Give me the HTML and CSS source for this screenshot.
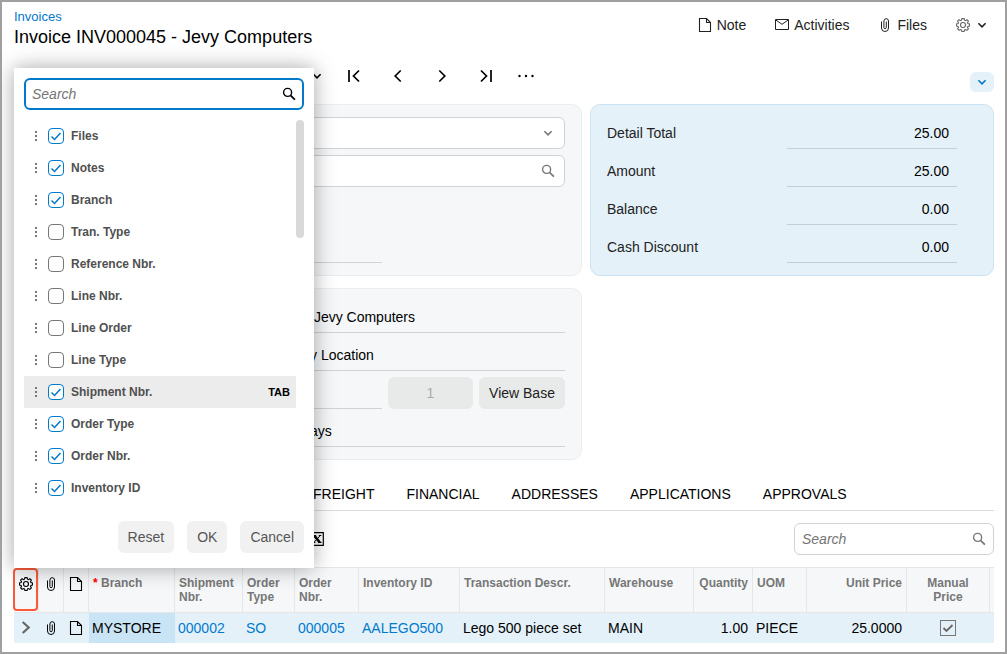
FILE: index.html
```html
<!DOCTYPE html>
<html lang="en">
    <head>
        <meta charset="utf-8">
        <title>Invoices</title>
        <link rel="stylesheet" href="styles.css">
    </head>
    <body>
        <!-- shared icons -->
        <svg class="sprite" aria-hidden="true">
            <symbol id="i-note" viewBox="0 0 14 14"><path d="M1.500 .5h7l4 4v9h-11zM8.500 .5v4h4" fill="none" stroke="currentColor" stroke-width="1.100"/></symbol>
            <symbol id="i-mail" viewBox="0 0 14 14"><path d="M.5 1.500h13v10H.5zM.8 2L7 6.300 13.200 2" fill="none" stroke="currentColor" stroke-width="1"/></symbol>
            <symbol id="i-clip" viewBox="0 0 14 14"><path d="M3.500 3.500v6.500a3.500 3.500 0 0 0 7 0V3a2.300 2.300 0 0 0-4.600 0v6.500a1.200 1.200 0 0 0 2.400 0V3.500" fill="none" stroke="currentColor" stroke-width="1"/></symbol>
            <symbol id="i-gear" viewBox="0 0 14 14"><path d="M5.900 .6h2.200l.4 1.600 1 .4 1.400-.9 1.500 1.500-.9 1.400.4 1 1.600.4v2.100l-1.600.4-.4 1 .9 1.400-1.500 1.500-1.400-.9-1 .4-.4 1.600H5.900l-.4-1.600-1-.4-1.400.9-1.500-1.500.9-1.400-.4-1-1.600-.4V6l1.600-.4.4-1-.9-1.400 1.500-1.500 1.400.9 1-.4z" fill="none" stroke="currentColor" stroke-width="1.100"/><circle cx="7" cy="7" r="2.500" fill="none" stroke="currentColor" stroke-width="1.100"/></symbol>
            <symbol id="i-down" viewBox="0 0 14 14"><path d="M3.400 5.200L7 8.800l3.600-3.600" fill="none" stroke="currentColor" stroke-width="1.600"/></symbol>
            <symbol id="i-search" viewBox="0 0 14 14"><circle cx="5.600" cy="5.400" r="4" fill="none" stroke="currentColor" stroke-width="1.400"/><path d="M8.500 8.300l4.400 4.400" stroke="currentColor" stroke-width="1.700"/></symbol>
            <symbol id="i-first" viewBox="0 0 14 14"><path d="M2 1v12M12 1.500L6.500 7l5.500 5.500" fill="none" stroke="currentColor" stroke-width="1.700"/></symbol>
            <symbol id="i-prev" viewBox="0 0 14 14"><path d="M9.700 1.500L4.200 7l5.500 5.500" fill="none" stroke="currentColor" stroke-width="1.700"/></symbol>
            <symbol id="i-next" viewBox="0 0 14 14"><path d="M4.300 1.500L9.800 7l-5.500 5.500" fill="none" stroke="currentColor" stroke-width="1.700"/></symbol>
            <symbol id="i-last" viewBox="0 0 14 14"><path d="M12 1v12M2 1.500L7.500 7 2 12.500" fill="none" stroke="currentColor" stroke-width="1.700"/></symbol>
            <symbol id="i-more" viewBox="0 0 16 14"><circle cx="1.500" cy="7" r="1.200"/><circle cx="8" cy="7" r="1.200"/><circle cx="14.500" cy="7" r="1.200"/></symbol>
            <symbol id="i-excel" viewBox="0 0 14 14"><path d="M.7 .7h12.600v12.600H.7z" fill="none" stroke="currentColor" stroke-width="1.200"/><path d="M4.200 3.500l5.600 7" stroke="currentColor" stroke-width="2.600"/><path d="M10.300 3.500L3.800 10.500M2.800 3.500h3.400M8.800 3.500h2.600M2.600 10.500h2.800M8 10.500h3.500" stroke="currentColor" stroke-width="1"/></symbol>
            <symbol id="i-row" viewBox="0 0 14 14"><path d="M3.700 1L9.700 6.500l-6 5.500" fill="none" stroke="currentColor" stroke-width="2.200"/></symbol>
            <symbol id="i-drag" viewBox="0 0 4 12"><path d="M1 1h2v2H1zM1 5h2v2H1zM1 9h2v2H1z"/></symbol>
        </svg>

        <header class="head">
            <div>
                <a class="crumb" href="#">Invoices</a>
                <h1>Invoice INV000045 - Jevy Computers</h1>
            </div>
            <div class="actions">
                <button><svg class="icon"><use href="#i-note"/></svg>Note</button>
                <button><svg class="icon"><use href="#i-mail"/></svg>Activities</button>
                <button><svg class="icon"><use href="#i-clip"/></svg>Files</button>
                <button aria-label="Settings"><svg class="icon gray"><use href="#i-gear"/></svg><svg class="icon"><use href="#i-down"/></svg></button>
            </div>
        </header>

        <div class="toolbar">
            <button class="drop" aria-label="Menu"><svg class="icon"><use href="#i-down"/></svg></button>
            <button aria-label="First"><svg class="icon"><use href="#i-first"/></svg></button>
            <button aria-label="Previous"><svg class="icon"><use href="#i-prev"/></svg></button>
            <button aria-label="Next"><svg class="icon"><use href="#i-next"/></svg></button>
            <button aria-label="Last"><svg class="icon"><use href="#i-last"/></svg></button>
            <button class="more" aria-label="More"><svg class="icon wide"><use href="#i-more"/></svg></button>
            <button class="collapse" aria-label="Expand"><svg class="icon"><use href="#i-down"/></svg></button>
        </div>

        <main>
            <div class="cards">
                <section class="card">
                    <div class="box">
                        <select aria-label="Type"><option></option></select>
                        <svg class="icon"><use href="#i-down"/></svg>
                    </div>
                    <div class="box">
                        <input type="text" aria-label="Reference">
                        <svg class="icon"><use href="#i-search"/></svg>
                    </div>
                    <div class="spacer"></div>
                    <div class="split">
                        <input class="line" type="text" aria-label="Date">
                    </div>
                </section>
                <section class="card totals">
                    <div class="total"><label for="detail">Detail Total</label><input class="line" id="detail" value="25.00" readonly></div>
                    <div class="total"><label for="amount">Amount</label><input class="line" id="amount" value="25.00" readonly></div>
                    <div class="total"><label for="balance">Balance</label><input class="line" id="balance" value="0.00" readonly></div>
                    <div class="total"><label for="discount">Cash Discount</label><input class="line" id="discount" value="0.00" readonly></div>
                </section>
                <section class="card">
                    <input class="line" aria-label="Customer" value=" Jevy Computers" readonly>
                    <input class="line" aria-label="Location" value="y Location" readonly>
                    <div class="split">
                        <input class="line" type="text" aria-label="Currency" readonly>
                        <button class="btn" disabled>1</button>
                        <button class="btn">View Base</button>
                    </div>
                    <input class="line" aria-label="Terms" value="ays" readonly>
                </section>
            </div>

            <nav class="tabs">
                <button>FREIGHT</button>
                <button>FINANCIAL</button>
                <button>ADDRESSES</button>
                <button>APPLICATIONS</button>
                <button>APPROVALS</button>
            </nav>

            <div class="gridbar">
                <button aria-label="Export"><svg class="icon"><use href="#i-excel"/></svg></button>
                <div class="box search">
                    <input type="text" placeholder="Search" aria-label="Search lines">
                    <svg class="icon"><use href="#i-search"/></svg>
                </div>
            </div>

            <table>
                <colgroup>
                    <col class="w-icon"><col class="w-icon"><col class="w-icon">
                    <col class="w-branch"><col class="w-ship"><col class="w-otype"><col class="w-onbr">
                    <col class="w-inv"><col><col class="w-ware"><col class="w-qty">
                    <col class="w-uom"><col class="w-price"><col class="w-manual"><col class="w-end">
                </colgroup>
                <thead>
                    <tr>
                        <th class="ic"><button class="config" aria-label="Columns"><svg class="icon"><use href="#i-gear"/></svg></button></th>
                        <th class="ic"><svg class="icon"><use href="#i-clip"/></svg></th>
                        <th class="ic"><svg class="icon"><use href="#i-note"/></svg></th>
                        <th><span class="req">*</span> Branch</th>
                        <th>Shipment Nbr.</th>
                        <th>Order Type</th>
                        <th>Order Nbr.</th>
                        <th>Inventory ID</th>
                        <th>Transaction Descr.</th>
                        <th>Warehouse</th>
                        <th class="num">Quantity</th>
                        <th>UOM</th>
                        <th class="num">Unit Price</th>
                        <th class="mid">Manual Price</th>
                        <th></th>
                    </tr>
                </thead>
                <tbody>
                    <tr>
                        <td class="ic gray"><svg class="icon"><use href="#i-row"/></svg></td>
                        <td class="ic"><svg class="icon"><use href="#i-clip"/></svg></td>
                        <td class="ic"><svg class="icon"><use href="#i-note"/></svg></td>
                        <td class="current">MYSTORE</td>
                        <td><a href="#">000002</a></td>
                        <td><a href="#">SO</a></td>
                        <td><a href="#">000005</a></td>
                        <td><a href="#">AALEGO500</a></td>
                        <td>Lego 500 piece set</td>
                        <td>MAIN</td>
                        <td class="num">1.00</td>
                        <td>PIECE</td>
                        <td class="num">25.0000</td>
                        <td class="mid"><input class="check square" type="checkbox" aria-label="Manual Price" checked></td>
                        <td></td>
                    </tr>
                </tbody>
            </table>
        </main>

        <!-- column configuration popup -->
        <div class="popup">
            <div class="box search focus">
                <input type="text" placeholder="Search" aria-label="Search columns">
                <svg class="icon"><use href="#i-search"/></svg>
            </div>
            <div class="list">
                <ul>
                    <li><svg class="drag"><use href="#i-drag"/></svg><label><input class="check" type="checkbox" checked>Files</label></li>
                    <li><svg class="drag"><use href="#i-drag"/></svg><label><input class="check" type="checkbox" checked>Notes</label></li>
                    <li><svg class="drag"><use href="#i-drag"/></svg><label><input class="check" type="checkbox" checked>Branch</label></li>
                    <li><svg class="drag"><use href="#i-drag"/></svg><label><input class="check" type="checkbox">Tran. Type</label></li>
                    <li><svg class="drag"><use href="#i-drag"/></svg><label><input class="check" type="checkbox">Reference Nbr.</label></li>
                    <li><svg class="drag"><use href="#i-drag"/></svg><label><input class="check" type="checkbox">Line Nbr.</label></li>
                    <li><svg class="drag"><use href="#i-drag"/></svg><label><input class="check" type="checkbox">Line Order</label></li>
                    <li><svg class="drag"><use href="#i-drag"/></svg><label><input class="check" type="checkbox">Line Type</label></li>
                    <li class="active"><svg class="drag"><use href="#i-drag"/></svg><label><input class="check" type="checkbox" checked>Shipment Nbr.</label><span class="tab">TAB</span></li>
                    <li><svg class="drag"><use href="#i-drag"/></svg><label><input class="check" type="checkbox" checked>Order Type</label></li>
                    <li><svg class="drag"><use href="#i-drag"/></svg><label><input class="check" type="checkbox" checked>Order Nbr.</label></li>
                    <li><svg class="drag"><use href="#i-drag"/></svg><label><input class="check" type="checkbox" checked>Inventory ID</label></li>
                </ul>
                <div class="thumb"></div>
            </div>
            <div class="buttons">
                <button>Reset</button>
                <button>OK</button>
                <button>Cancel</button>
            </div>
        </div>
    </body>
</html>
```
FILE: styles.css
```css
*{
    box-sizing:border-box;
}
body{
    position:relative;
    margin:0;
    min-height:100vh;
    padding:7px 11px 0 12px;
    border:2px solid #a0a0a0;
    background-color:white;
    color:black;
    font:14px "Liberation Sans", Arial, sans-serif;
}
button, input, select{
    font:inherit;
    color:inherit;
    margin:0;
}
button{
    border:0;
    padding:0;
    background:none;
}
a{
    color:#027acc;
    text-decoration:none;
}
.sprite{
    position:absolute;
    width:0;
    height:0;
}
.icon{
    display:block;
    flex:none;
    width:14px;
    height:14px;
    fill:currentColor;
}
.icon.wide{
    width:16px;
}
.gray{
    color:#666;
}

/* header */
.head{
    display:flex;
    justify-content:space-between;
    align-items:flex-start;
}
.crumb{
    display:block;
    font-size:13px;
    line-height:16px;
}
h1{
    margin:0;
    font-size:18px;
    font-weight:normal;
    line-height:24px;
}
.actions{
    display:flex;
    gap:29px;
    padding:8px 5px 0 0;
    color:#222;
}
.actions button{
    display:flex;
    align-items:center;
    gap:5px;
    height:16px;
}
.toolbar{
    display:flex;
    height:32px;
    margin:11px 0 12px;
    padding-left:287px;
}
.toolbar button{
    display:flex;
    align-items:center;
    justify-content:center;
    width:44px;
}
.toolbar .drop{
    width:31px;
}
.toolbar .more{
    width:36px;
}
.toolbar .collapse{
    align-self:flex-end;
    width:24px;
    height:20px;
    margin-left:auto;
    border-radius:6px;
    background-color:#e4f1f9;
    color:#027acc;
}

/* form */
.cards{
    display:grid;
    grid-template-columns:568fr 404fr;
    gap:12px 8px;
}
.card{
    display:flex;
    flex-direction:column;
    gap:6px;
    padding:12px 16px 12px 287px;
    border:1px solid #ebedef;
    border-radius:10px;
    background-color:#f5f7f9;
}
.totals{
    padding:12px 36px 12px 16px;
    border-color:#cbe4f4;
    background-color:#e4f1f9;
}
.box{
    position:relative;
}
.box input, .box select{
    display:block;
    appearance:none;
    width:100%;
    height:32px;
    padding:0 32px 0 7px;
    border:1px solid #d0d2d5;
    border-radius:6px;
    background-color:white;
    outline:none;
}
.box .icon{
    position:absolute;
    top:9px;
    right:10px;
    color:#777;
    pointer-events:none;
}
.spacer{
    height:32px;
}
.line{
    width:100%;
    min-width:0;
    height:32px;
    padding:0 8px;
    border:0;
    border-bottom:1px solid #d0d2d5;
    border-radius:0;
    background:none;
    outline:none;
}
.split{
    display:grid;
    grid-template-columns:1fr 85px 86px;
    gap:6px;
}
.btn{
    height:32px;
    border-radius:6px;
    background-color:#e8eae9;
    color:#222;
}
.btn:disabled{
    color:#aaa;
}
.total{
    display:flex;
    align-items:center;
    justify-content:space-between;
    color:#222;
}
.total .line{
    width:170px;
    border-color:#c3cfd8;
    text-align:right;
    color:black;
}

/* tabs and grid */
.tabs{
    display:flex;
    gap:32px;
    height:33px;
    margin-top:18px;
    padding-left:299px;
    border-bottom:1px solid #ddd;
}
.gridbar{
    display:flex;
    align-items:center;
    justify-content:space-between;
    padding:12px 0 12px 296px;
}
.search{
    width:200px;
}
.search .icon{
    right:8px;
}
.search input::placeholder{
    color:#757575;
    font-style:italic;
    opacity:1;
}
table{
    width:100%;
    table-layout:fixed;
    border-collapse:separate;
    border-spacing:0;
}
.w-icon{width:25px;}
.w-branch{width:86px;}
.w-ship{width:68px;}
.w-otype{width:52px;}
.w-onbr{width:64px;}
.w-inv{width:101px;}
.w-ware{width:89px;}
.w-qty{width:59px;}
.w-uom{width:54px;}
.w-price{width:100px;}
.w-manual{width:83px;}
.w-end{width:4px;}
th{
    position:relative;
    height:46px;
    padding:8px 4px 0;
    border:solid #e4e6e8;
    border-width:1px 1px 1px 0;
    background-color:#f5f7f9;
    color:#777;
    font-size:12px;
    line-height:14px;
    text-align:left;
    vertical-align:top;
}
th:last-child, td:last-child{
    padding:0;
    border-right:0;
}
td{
    height:30px;
    padding:0 4px 0 3px;
    background-color:#e4f1f9;
    white-space:nowrap;
}
.current{
    background-color:#c9e4f4;
}
.num{
    text-align:right;
}
td.num{
    padding-right:5px;
}
.mid{
    text-align:center;
}
th.mid{
    padding:8px 16px 0;
}
.ic{
    padding-left:5px;
    padding-right:0;
}
th.ic{
    padding-top:9px;
    color:black;
}
.req{
    color:red;
}
.config{
    position:absolute;
    top:0;
    left:-1px;
    display:flex;
    justify-content:center;
    width:25px;
    height:43px;
    padding-top:7px;
    border:2px solid #fa5a38;
    border-radius:4px;
}

/* check boxes */
.check{
    appearance:none;
    display:block;
    width:16px;
    height:16px;
    border:1px solid #777;
    border-radius:4px;
    background:white center no-repeat;
}
.check:checked{
    border-color:#027acc;
    background-image:url("data:image/svg+xml,%3Csvg xmlns='http://www.w3.org/2000/svg' width='14' height='14'%3E%3Cpath d='M2.500 7.500l3 3 6-6.500' fill='none' stroke='%23027acc' stroke-width='1.500'/%3E%3C/svg%3E");
}
.square:checked{
    display:inline-block;
    border-color:#777;
    border-radius:0;
    background-color:transparent;
    background-image:url("data:image/svg+xml,%3Csvg xmlns='http://www.w3.org/2000/svg' width='14' height='14'%3E%3Cpath d='M2.500 7l3 3 6-6' fill='none' stroke='%23666' stroke-width='1.800'/%3E%3C/svg%3E");
    vertical-align:middle;
}
td.mid{
    line-height:14px;
}

/* popup */
.popup{
    position:absolute;
    top:66px;
    left:12px;
    width:300px;
    padding:10px 10px 15px;
    background-color:white;
    box-shadow:0 0 20px rgba(0,0,0,.35);
}
.focus{
    width:100%;
}
.focus input{
    padding:0 32px 0 6px;
    border:2px solid #027acc;
}
.focus .icon{
    color:black;
}
.list{
    display:flex;
    margin:10px 0 17px;
}
ul{
    flex:1;
    margin:0;
    padding:0;
    list-style:none;
}
li{
    display:flex;
    align-items:center;
    gap:10px;
    height:32px;
    padding:0 6px 0 10px;
    color:#505050;
    font-size:12px;
    font-weight:bold;
}
li label{
    display:flex;
    align-items:center;
    gap:7px;
}
.drag{
    width:4px;
    height:12px;
    fill:#777;
}
.active{
    background-color:#ececec;
}
.tab{
    margin-left:auto;
    color:black;
    font-size:11px;
}
.thumb{
    width:8px;
    height:118px;
    border-radius:4px;
    background-color:#d9d9d9;
}
.buttons{
    display:flex;
    justify-content:flex-end;
    gap:13px;
}
.buttons button{
    height:32px;
    padding:0 10px;
    border-radius:6px;
    background-color:#f1f1f1;
    color:#555;
}
```
